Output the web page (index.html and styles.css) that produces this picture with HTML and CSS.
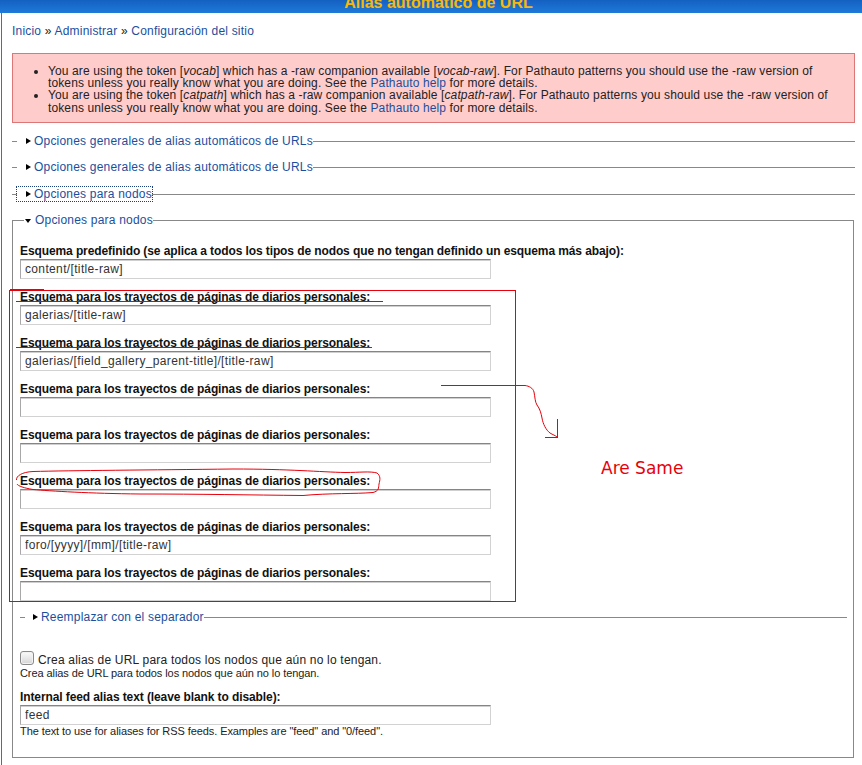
FILE: index.html
```html
<!DOCTYPE html>
<html lang="es">
<head>
  <meta charset="UTF-8" />
  <meta name="viewport" content="width=device-width, initial-scale=1.0" />
  <title>Alias automático de URL</title>
  <link rel="stylesheet" href="styles.css">
</head>
<body>
  <div class="topbar">
    <h1>Alias automático de URL</h1>
  </div>

  <div class="page">
    <div class="breadcrumb">
      <a href="#">Inicio</a> » <a href="#">Administrar</a> » <a href="#">Configuración del sitio</a>
    </div>

    <div class="messages error">
      <ul>
        <li>You are using the token [<em>vocab</em>] which has a -raw companion available [<em>vocab-raw</em>]. For Pathauto patterns you should use the -raw version of tokens unless you really know what you are doing. See the <a href="#">Pathauto help</a> for more details.</li>
        <li>You are using the token [<em>catpath</em>] which has a -raw companion available [<em>catpath-raw</em>]. For Pathauto patterns you should use the -raw version of tokens unless you really know what you are doing. See the <a href="#">Pathauto help</a> for more details.</li>
      </ul>
    </div>

    <form>
      <fieldset class="fs collapsed">
        <legend><a href="#">Opciones generales de alias automáticos de URLs</a></legend>
      </fieldset>
      <fieldset class="fs collapsed">
        <legend><a href="#">Opciones generales de alias automáticos de URLs</a></legend>
      </fieldset>
      <fieldset class="fs collapsed">
        <legend><a href="#" class="focused">Opciones para nodos</a></legend>
      </fieldset>

      <fieldset class="fs expanded">
        <legend><a href="#">Opciones para nodos</a></legend>

        <div class="form-item">
          <label>Esquema predefinido (se aplica a todos los tipos de nodos que no tengan definido un esquema más abajo):</label>
          <input type="text" value="content/[title-raw]">
        </div>
        <div class="form-item">
          <label>Esquema para los trayectos de páginas de diarios personales:</label>
          <input type="text" value="galerias/[title-raw]">
        </div>
        <div class="form-item">
          <label>Esquema para los trayectos de páginas de diarios personales:</label>
          <input type="text" value="galerias/[field_gallery_parent-title]/[title-raw]">
        </div>
        <div class="form-item">
          <label>Esquema para los trayectos de páginas de diarios personales:</label>
          <input type="text" value="">
        </div>
        <div class="form-item">
          <label>Esquema para los trayectos de páginas de diarios personales:</label>
          <input type="text" value="">
        </div>
        <div class="form-item">
          <label>Esquema para los trayectos de páginas de diarios personales:</label>
          <input type="text" value="">
        </div>
        <div class="form-item">
          <label>Esquema para los trayectos de páginas de diarios personales:</label>
          <input type="text" value="foro/[yyyy]/[mm]/[title-raw]">
        </div>
        <div class="form-item">
          <label>Esquema para los trayectos de páginas de diarios personales:</label>
          <input type="text" value="">
        </div>

        <fieldset class="fs collapsed inner">
          <legend><a href="#">Reemplazar con el separador</a></legend>
        </fieldset>

        <div class="form-item check">
          <label><input type="checkbox">Crea alias de URL para todos los nodos que aún no lo tengan.</label>
          <div class="description">Crea alias de URL para todos los nodos que aún no lo tengan.</div>
        </div>
        <div class="form-item">
          <label>Internal feed alias text (leave blank to disable):</label>
          <input type="text" value="feed">
          <div class="description">The text to use for aliases for RSS feeds. Examples are "feed" and "0/feed".</div>
        </div>
      </fieldset>
    </form>
  </div>

  <!-- hand-drawn notes on top of the form -->
  <svg class="marks" width="862" height="765" viewBox="0 0 862 765">
    <g fill="none" stroke="#e8000b" stroke-width="1" shape-rendering="crispEdges">
      <rect x="9.5" y="290.5" width="506" height="311"/>
      <path d="M10 289.5H44"/>
      <path d="M16 301.5H383"/>
      <path d="M16 347.5H372"/>
      <path d="M441 385.5H525"/>
      <path d="M557.5 419V438M545 437.5H557.5"/>
    </g>
    <g fill="none" stroke="#e8000b" stroke-width="1">
      <path d="M525 385.5C529 386 533 388 534 392C535 397 535 402 537 405C540 409 541 413 542 418C543 424 546 430 550 433C553 435 555 435 557.5 437.5"/>
      <path d="M16.5 480C16 476 22 472 33 471.5C70 470.5 150 470 233 469C290 469 320 472 345 472.5C360 472.5 370 471 377 473C381 476 380 480 379 484C378.5 488 379 491 373 492.5C355 494 330 493 303 495.5C250 495 200 494 140 494C90 493.5 50 491 33 489.5C24 488 18 486 17 484"/>
    </g>
    <text x="601" y="474" class="note">Are Same</text>
  </svg>
</body>
</html>
```

FILE: styles.css
```css
* { box-sizing: border-box; }

body {
  margin: 0;
  font-family: "Liberation Sans", Arial, sans-serif;
  font-size: 12px;
  letter-spacing: .2px;
  color: #222;
  background: #fff;
  position: relative;
}

a {
  color: #1b4f9e;
  text-decoration: none;
}

.topbar {
  height: 13px;
  overflow: hidden;
  background: linear-gradient(#1460c2, #1f7ad8);
  text-align: center;
}

.topbar h1 {
  margin: -6px 0 0;
  padding-left: 15px;
  font-size: 16px;
  line-height: 18px;
  font-weight: bold;
  letter-spacing: 0;
  color: #f6b80c;
}

.page {
  margin-left: 1px;
  border-left: 1px solid #3f6fb7;
  padding: 11px 7px 0 10px;
  min-height: calc(100vh - 13px);
}

.breadcrumb {
  line-height: 14px;
}

.messages {
  margin: 15px 0 11px;
  padding: 11px 10px 8px;
  line-height: 12.2px;
  letter-spacing: .12px;
  background: #ffcccc;
  border: 1px solid #dd7777;
}

.messages ul {
  margin: 0;
  padding-left: 25px;
}

/* fieldsets */
.fs {
  margin: 0;
  padding: 0;
  border: 1px solid #888;
  min-width: 0;
}

.fs > legend {
  padding: 0;
  line-height: 14.5px;
}

.fs > legend a {
  display: inline-block;
  position: relative;
  padding-left: 17px;
}

.fs > legend a::before {
  content: "";
  position: absolute;
  width: 0;
  height: 0;
}

.fs.collapsed {
  border-width: 1px 0 0;
  margin-bottom: 12px;
}

.fs.collapsed > legend {
  margin-left: 5px;
}

.fs.collapsed > legend a::before {
  left: 9px;
  top: 4px;
  border-left: 5px solid #000;
  border-top: 3.5px solid transparent;
  border-bottom: 3.5px solid transparent;
}

.fs > legend a.focused {
  outline: 1px dotted #1b3f7f;
}

.fs.expanded {
  margin-right: 1px;
  padding: 18px 6px 20px 7px;
}

.fs.expanded > legend {
  margin-left: 4px;
}

.fs.expanded > legend a {
  padding-left: 11px;
}

.fs.expanded > legend a::before {
  left: 1px;
  top: 5.5px;
  border-top: 4px solid #000;
  border-left: 3px solid transparent;
  border-right: 3px solid transparent;
}

.fs.inner {
  margin: 9.5px 0 26px;
}

.fs.inner > legend {
  margin-left: 5px;
}

.fs.inner > legend a {
  padding-left: 16px;
}

.fs.inner > legend a::before {
  left: 8px;
}

/* form items */
.form-item {
  margin-top: 13px;
}

.form-item:first-of-type {
  margin-top: 0;
}

.form-item label {
  display: block;
  font-weight: bold;
  line-height: 11px;
  padding-bottom: 2px;
  letter-spacing: -.1px;
  color: #111;
}

.form-item input[type="text"] {
  display: block;
  width: 471px;
  height: 20px;
  margin: 0;
  padding: 0 4px;
  font-family: "Liberation Sans", Arial, sans-serif;
  font-size: 12px;
  letter-spacing: .35px;
  color: #333;
  background: #fff;
  border: 1px solid #d2d2d2;
  border-top-color: #858585;
  border-left-color: #a8a8a8;
  box-shadow: inset 0 1px 0 #cfcfcf;
}

.form-item.check label {
  font-weight: normal;
  line-height: 14px;
  padding-bottom: 0;
  letter-spacing: .2px;
  color: #222;
}

.form-item.check input[type="checkbox"] {
  appearance: none;
  -webkit-appearance: none;
  display: inline-block;
  width: 14px;
  height: 14px;
  margin: 0 4px 0 0;
  vertical-align: -1px;
  border: 1px solid #8a8a8a;
  border-radius: 3px;
  background: linear-gradient(#fbfbfb, #d6d6d6);
  box-shadow: inset 0 0 0 1px #f2f2f2;
}

.description {
  font-size: 11px;
  line-height: 12px;
  letter-spacing: -.08px;
  color: #222;
}

/* notes layer */
.marks {
  position: absolute;
  top: 0;
  left: 0;
  pointer-events: none;
}

.marks .note {
  font-family: "DejaVu Sans", sans-serif;
  font-size: 17px;
  letter-spacing: 0;
  fill: #e8000b;
}
```
